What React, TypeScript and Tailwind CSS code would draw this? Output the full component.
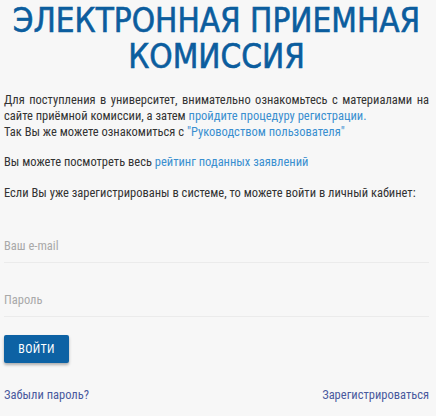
import React from 'react';

export default function App() {
  return (
    <div className="min-h-[416px] bg-[#f7f7f7] pl-1 pr-[7px] pt-[3px] font-['Roboto_Condensed','Roboto',sans-serif] text-[12.5px] text-[#333]">
      <h1 className="text-center font-['DejaVu_Sans_Condensed','Roboto_Condensed',sans-serif] text-[33px] font-normal uppercase leading-[36px] text-[#0b5d9e] [-webkit-text-stroke:0.6px_#0b5d9e]">
        Электронная приемная комиссия
      </h1>

      <div className="mt-[17px] leading-4">
        <p className="text-justify">
          Для поступления в университет, внимательно ознакомьтесь с материалами на сайте приёмной комиссии, а затем{' '}
          <a href="#" className="text-[#3a8fd0]">пройдите процедуру регистрации.</a>
        </p>
        <p>
          Так Вы же можете ознакомиться с <a href="#" className="text-[#3a8fd0]">"Руководством пользователя"</a>
        </p>
        <p className="mt-[14px]">
          Вы можете посмотреть весь <a href="#" className="text-[#3a8fd0]">рейтинг поданных заявлений</a>
        </p>
        <p className="mt-[15px]">Если Вы уже зарегистрированы в системе, то можете войти в личный кабинет:</p>
      </div>

      <form className="mt-[16px]">
        <input
          type="email"
          placeholder="Ваш e-mail"
          className="block h-[46px] w-full border-b border-[#ebebeb] bg-transparent pt-[12px] outline-none placeholder:text-[#a9a9a9]"
        />
        <input
          type="password"
          placeholder="Пароль"
          className="mt-2 block h-[46px] w-full border-b border-[#ebebeb] bg-transparent pt-[12px] outline-none placeholder:text-[#a9a9a9]"
        />
        <button
          type="button"
          className="mt-[18px] h-7 w-[65px] rounded-[2px] bg-[#0d62a4] text-[12px] font-normal uppercase tracking-wide text-white shadow-[0_2px_3px_rgba(0,0,0,0.3)]"
        >
          Войти
        </button>
        <div className="mt-[23px] flex justify-between text-[#4a5a9e]">
          <a href="#">Забыли пароль?</a>
          <a href="#">Зарегистрироваться</a>
        </div>
      </form>
    </div>
  );
}
